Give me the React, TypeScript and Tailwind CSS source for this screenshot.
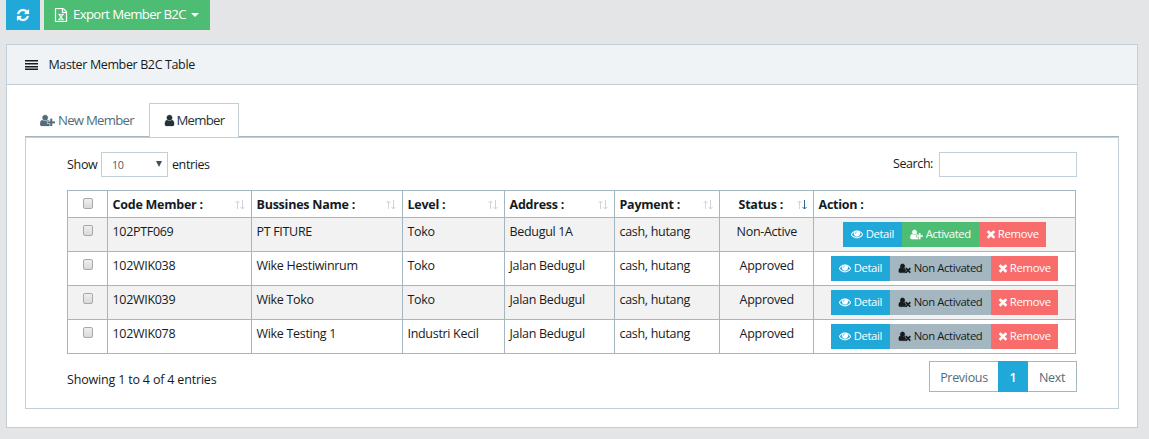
import React from "react";

const USER_HEAD =
  "M704 896q-159 0-271.5-112.5t-112.5-271.5 112.5-271.5 271.5-112.5 271.5 112.5 112.5 271.5-112.5 271.5-271.5 112.5z";

const ICONS = {
  refresh: {
    w: 1792,
    d: "M1639 1056q0 5-1 7-64 268-268 434.5t-478 166.5q-146 0-282.5-55t-243.5-157l-129 129q-19 19-45 19t-45-19-19-45v-448q0-26 19-45t45-19h448q26 0 45 19t19 45-19 45l-137 137q71 66 161 102t187 36q134 0 250-65t186-179q11-17 53-117 8-23 30-23h192q13 0 22.5 9.5t9.5 22.5zm25-800v448q0 26-19 45t-45 19h-448q-26 0-45-19t-19-45 19-45l138-138q-148-137-349-137-134 0-250 65t-186 179q-11 17-53 117-8 23-30 23h-199q-13 0-22.5-9.5t-9.5-22.5v-7q65-268 270-434.5t480-166.5q146 0 284 55.5t245 156.5l130-129q19-19 45-19t45 19 19 45z",
  },
  excel: {
    w: 1792,
    d: "M1596 380q28 28 48 76t20 88v1152q0 40-28 68t-68 28h-1344q-40 0-68-28t-28-68v-1600q0-40 28-68t68-28h896q40 0 88 20t76 48zm-444-244v376h376q-10-29-22-41l-313-313q-12-12-41-22zm384 1528v-1024h-416q-40 0-68-28t-28-68v-416h-768v1536h1280zm-979-234v106h281v-106h-75l103-161q5-7 10-16.5t7.5-13.5 3.5-4h2q1 4 5 10 2 4 4.5 7.5t6 8 6.5 8.5l107 161h-76v106h291v-106h-68l-192-273 195-282h67v-107h-279v107h74l-103 159q-4 7-10 16.5t-9 13.5l-2 3h-2q-1-4-5-10-6-11-17-23l-106-159h76v-107h-290v107h68l189 272-194 283h-68z",
  },
  userPlus: {
    w: 2048,
    d:
      USER_HEAD +
      "M1664 1024h352q13 0 22.5 9.5t9.5 22.5v192q0 13-9.5 22.5t-22.5 9.5h-352v352q0 13-9.5 22.5t-22.5 9.5h-192q-13 0-22.5-9.5t-9.5-22.5v-352h-352q-13 0-22.5-9.5t-9.5-22.5v-192q0-13 9.5-22.5t22.5-9.5h352v-352q0-13 9.5-22.5t22.5-9.5h192q13 0 22.5 9.5t9.5 22.5v352zm-736 224q0 52 38 90t90 38h256v238q-68 50-171 50h-874q-121 0-194-69t-73-190q0-53 3.5-103.5t14-109 26.5-108.5 43-97.5 62-81 85.5-53.5 111.5-20q19 0 39 17 79 61 154.5 91.5t164.5 30.5 164.5-30.5 154.5-91.5q20-17 39-17 132 0 217 96h-223q-52 0-90 38t-38 90v192z",
  },
  userTimes: {
    w: 2048,
    d:
      USER_HEAD +
      "M1781 1216l249 249q9 9 9 23 0 13-9 22l-136 136q-9 9-22 9-14 0-23-9l-249-249-249 249q-9 9-23 9-13 0-22-9l-136-136q-9-9-9-22 0-14 9-23l249-249-249-249q-9-9-9-23 0-13 9-22l136-136q9-9 22-9 14 0 23 9l249 249 249-249q9-9 23-9 13 0 22 9l136 136q9 9 9 22 0 14-9 23zM1283 1216l-181-181q-37-37-37-91 0-53 37-90l83-83q-21-3-44-3-19 0-39 17-79 61-154.5 91.5t-164.5 30.5-164.5-30.5-154.5-91.5q-20-17-39-17-62 0-111.5 20t-85.5 53.5-62 81-43 97.5-26.5 108.5-14 109-3.5 103.5q0 121 73 190t194 69h874q25 0 50-3l-85-86q-37-37-37-90 0-54 37-91z",
  },
  user: {
    w: 1792,
    d: "M1536 1399q0 109-62.5 187t-150.5 78h-854q-88 0-150.5-78t-62.5-187q0-85 8.5-160.5t31.5-152 58.5-131 94-89 134.5-34.5q131 128 313 128t313-128q76 0 134.5 34.5t94 89 58.5 131 31.5 152 8.5 160.5zm-256-887q0 159-112.5 271.5t-271.5 112.5-271.5-112.5-112.5-271.5 112.5-271.5 271.5-112.5 271.5 112.5 112.5 271.5z",
  },
  eye: {
    w: 1792,
    d: "M1664 960q-152-236-381-353 61 104 61 225 0 185-131.5 316.5t-316.5 131.5-316.5-131.5-131.5-316.5q0-121 61-225-229 117-381 353 133 205 333.5 326.5t434.5 121.5 434.5-121.5 333.5-326.5zm-720-384q0-20-14-34t-34-14q-125 0-214.5 89.5t-89.5 214.5q0 20 14 34t34 14 34-14 14-34q0-86 61-147t147-61q20 0 34-14t14-34zm848 384q0 34-20 69-140 230-376.5 368.5t-499.5 138.5-499.5-139-376.5-368q-20-35-20-69t20-69q140-229 376.5-368t499.5-139 499.5 139 376.5 368q20 35 20 69z",
  },
  times: {
    w: 1792,
    d: "M1490 1322q0 40-28 68l-136 136q-28 28-68 28t-68-28l-294-294-294 294q-28 28-68 28t-68-28l-136-136q-28-28-28-68t28-68l294-294-294-294q-28-28-28-68t28-68l136-136q28-28 68-28t68 28l294 294 294-294q28-28 68-28t68 28l136 136q28 28 28 68t-28 68l-294 294 294 294q28 28 28 68z",
  },
};

function Icon({ name, className }: { name: keyof typeof ICONS; className: string }) {
  const icon = ICONS[name];
  return (
    <svg
      viewBox={`0 0 ${icon.w} 1792`}
      fill="currentColor"
      stroke="currentColor"
      strokeWidth={30}
      className={`shrink-0 ${className}`}
    >
      <path d={icon.d} />
    </svg>
  );
}

function Check() {
  return (
    <span className="ml-[10px] block h-[11px] w-[10px] rounded-[2px] border border-[#a9a9a9] bg-linear-to-b from-[#efefef] to-[#d9d9d9]" />
  );
}

function Sort({ desc = false }: { desc?: boolean }) {
  return (
    <svg viewBox="0 0 10 10" className="h-[10px] w-[10px] shrink-0" fill="none">
      <path d="M2.5 9V1M0.5 3l2-2 2 2" stroke="#d6d3da" />
      <path d="M7.5 0v9M5.5 7l2 2 2-2" stroke={desc ? "#2d6590" : "#c9d3df"} />
    </svg>
  );
}

const COLUMNS = ["Code Member :", "Bussines Name :", "Level :", "Address :", "Payment :"];

const ROWS = [
  { code: "102PTF069", name: "PT FITURE", level: "Toko", address: "Bedugul 1A", status: "Non-Active" },
  { code: "102WIK038", name: "Wike Hestiwinrum", level: "Toko", address: "Jalan Bedugul", status: "Approved" },
  { code: "102WIK039", name: "Wike Toko", level: "Toko", address: "Jalan Bedugul", status: "Approved" },
  { code: "102WIK078", name: "Wike Testing 1", level: "Industri Kecil", address: "Jalan Bedugul", status: "Approved" },
];

const CELL = "border border-[#a4b7c1] p-0 pl-[4.5px] pr-[5px] align-top";

function Actions({ active }: { active: boolean }) {
  return (
    <div className="mt-[4px] flex h-[25px] justify-center text-[11.3px] leading-[23px] tracking-[-0.4px] text-white">
      <button className="flex w-[59px] items-center gap-[3px] bg-[#20a8d8] pb-[2px] pl-[8px]">
        <Icon name="eye" className="h-[12px] w-[12px]" />
        Detail
      </button>
      {active ? (
        <button className="flex w-[101px] items-center gap-[3px] bg-[#a4b7c1] pb-[2px] pl-[8px] text-[#151b1e]">
          <Icon name="userTimes" className="mt-px h-[11px] w-[13px]" />
          Non Activated
        </button>
      ) : (
        <button className="flex w-[77px] items-center gap-[3px] bg-[#4dbd74] pb-[2px] pl-[8px]">
          <Icon name="userPlus" className="mt-px h-[11px] w-[13px]" />
          Activated
        </button>
      )}
      <button className="flex w-[67px] items-center gap-[1px] bg-[#f86c6b] pb-[2px] pl-[6px] tracking-[-0.25px]">
        <Icon name="times" className="mt-px h-[12px] w-[12px]" />
        Remove
      </button>
    </div>
  );
}

export default function App() {
  return (
    <div className="h-[439px] overflow-hidden bg-[#e4e5e6] pl-[6px] font-['Open_Sans',sans-serif] text-[12.5px] tracking-[-0.31px] text-[#151b1e]">
      <div className="flex h-[30px] gap-[4px] text-white">
        <button className="flex w-[34px] items-center justify-center bg-[#20a8d8]">
          <Icon name="refresh" className="h-[14px] w-[14px]" />
        </button>
        <button className="flex w-[166px] items-center bg-[#4dbd74] pl-[10px] text-[13.2px] tracking-[-0.65px] whitespace-nowrap">
          <Icon name="excel" className="mr-[5px] h-[14px] w-[14px]" />
          Export Member B2C
          <span className="-mt-px ml-[5px] border-x-4 border-t-4 border-x-transparent border-t-white" />
        </button>
      </div>

      <section className="mt-[14px] h-[384px] w-[1132px] border border-[#c2cfd6] bg-white">
        <header className="flex h-[40px] items-center border-b border-[#c2cfd6] bg-[#f0f3f5] pl-[18px] pt-px tracking-[-0.37px]">
          <svg viewBox="0 0 13 10" className="mr-[10.5px] mb-px h-[10px] w-[13px]" fill="#151b1e">
            <path d="M0 0h13v1.4H0zM0 3h13v1.4H0zM0 6h13v1.4H0zM0 8.6h13v1.4H0z" />
          </svg>
          Master Member B2C Table
        </header>

        <div className="pl-[18px] pt-[18px]">
          <div className="flex h-[34px] w-[1094px] border-b border-[#a4b7c1] text-[13.2px] tracking-[-0.75px]">
            <div className="flex w-[124px] items-center gap-[3px] pt-[2px] pl-[15px] text-[#536c79]">
              <Icon name="userPlus" className="h-[13px] w-[15px]" />
              New Member
            </div>
            <div className="-mb-px flex h-[34px] w-[90px] items-center gap-[1px] border border-b-0 border-[#c2cfd6] bg-white pl-[12.5px] text-[#263238]">
              <Icon name="user" className="h-[13px] w-[13px]" />
              Member
            </div>
          </div>

          <div className="h-[272px] w-[1094px] border border-[#c2cfd6] pl-[41px] pt-[14px]">
            <div className="flex h-[25px] w-[1010px] items-center">
              <span className="w-[34px] pt-px">Show</span>
              <div className="mr-[4px] flex h-[25px] w-[67px] items-center justify-between border border-[#c2cfd6] pl-[10px] pr-[5px] pt-px text-[10.8px] text-[#55595c]">
                10
                <svg viewBox="0 0 6 6" className="mb-[2px] h-[6px] w-[6px]" fill="#3e515b">
                  <path d="M0 0h6L3 6z" />
                </svg>
              </div>
              <span className="pt-px tracking-[-0.4px]">entries</span>
              <span className="ml-auto tracking-[-0.42px]">Search:</span>
              <input className="ml-[6px] h-[25px] w-[138px] border border-[#c2cfd6] outline-none" />
            </div>

            <table className="mt-[13px] w-[1009px] table-fixed border-collapse leading-[18px]">
              <colgroup>
                <col className="w-[40px]" />
                <col className="w-[144px]" />
                <col className="w-[151px]" />
                <col className="w-[102px]" />
                <col className="w-[110px]" />
                <col className="w-[105px]" />
                <col className="w-[94px]" />
                <col className="w-[262px]" />
              </colgroup>
              <thead>
                <tr className="h-[27px] text-left font-bold tracking-[-0.24px]">
                  <th className={CELL}>
                    <div className="pt-[7px]">
                      <Check />
                    </div>
                  </th>
                  {COLUMNS.map((label) => (
                    <th key={label} className={CELL}>
                      <div className="flex items-center justify-between pt-[5px] pr-[1px]">
                        {label}
                        <Sort />
                      </div>
                    </th>
                  ))}
                  <th className={CELL}>
                    <div className="flex items-center justify-between pl-[14px] pt-[5px] pr-[1px]">
                      Status :
                      <Sort desc />
                    </div>
                  </th>
                  <th className={CELL}>
                    <div className="pt-[5px]">Action :</div>
                  </th>
                </tr>
              </thead>
              <tbody>
                {ROWS.map((r) => (
                  <tr key={r.code} className="h-[34px] odd:bg-[#f2f2f2]">
                    <td className={CELL}>
                      <div className="pt-[7px]">
                        <Check />
                      </div>
                    </td>
                    <td className={CELL}>
                      <div className="pt-[5px]">{r.code}</div>
                    </td>
                    <td className={CELL}>
                      <div className="pt-[5px]">{r.name}</div>
                    </td>
                    <td className={CELL}>
                      <div className="pt-[5px]">{r.level}</div>
                    </td>
                    <td className={CELL}>
                      <div className="pt-[5px]">{r.address}</div>
                    </td>
                    <td className={CELL}>
                      <div className="pt-[5px]">cash, hutang</div>
                    </td>
                    <td className={CELL}>
                      <div className="pt-[5px] pl-px text-center">{r.status}</div>
                    </td>
                    <td className={CELL}>
                      <Actions active={r.status === "Approved"} />
                    </td>
                  </tr>
                ))}
              </tbody>
            </table>

            <div className="mt-[7px] flex w-[1010px] items-start justify-between">
              <div className="pt-[10px] leading-[18px] tracking-[-0.18px]">Showing 1 to 4 of 4 entries</div>
              <div className="flex h-[31px] items-stretch text-center leading-[31px] text-[#536c79]">
                <span className="w-[69px] border border-r-0 border-[#a4b7c1]">Previous</span>
                <span className="w-[30px] bg-[#20a8d8] pt-px font-semibold text-white">1</span>
                <span className="w-[49px] border border-l-0 border-[#a4b7c1]">Next</span>
              </div>
            </div>
          </div>
        </div>
      </section>
    </div>
  );
}
